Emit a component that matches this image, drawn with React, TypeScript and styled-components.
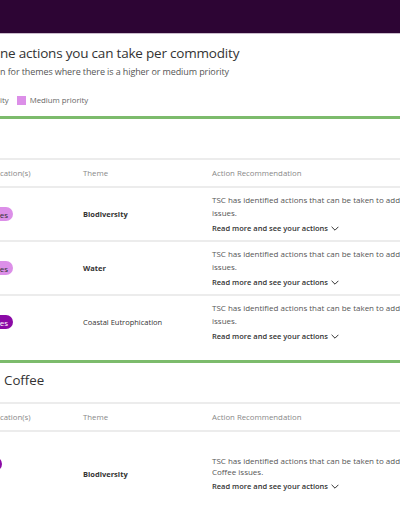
import styled, { createGlobalStyle } from "styled-components";

const GlobalStyle = createGlobalStyle`
  html, body {
    margin: 0;
    padding: 0;
    background: #fff;
    overflow: hidden;
    font-family: "Open Sans", "Noto Sans", sans-serif;
    color: #333;
  }
`;

type Priority = "higher" | "medium";

// visible = how far the pill's right end reaches into the frame
interface PillData {
  priority: Priority;
  visible: number;
}

interface Row {
  theme: string;
  bold?: boolean;
  pills: PillData[];
  lines: string[];
}

interface Commodity {
  name: string;
  rows: Row[];
}

const commodities: Commodity[] = [
  {
    name: "",
    rows: [
      {
        theme: "Biodiversity",
        bold: true,
        pills: [{ priority: "medium", visible: 13 }],
        lines: ["TSC has identified actions that can be taken to address Soy Biodiversity", "issues."],
      },
      {
        theme: "Water",
        bold: true,
        pills: [{ priority: "medium", visible: 13 }],
        lines: ["TSC has identified actions that can be taken to address Soy Water", "issues."],
      },
      {
        theme: "Coastal Eutrophication",
        pills: [{ priority: "higher", visible: 13 }],
        lines: ["TSC has identified actions that can be taken to address Soy Eutrophication", "issues."],
      },
    ],
  },
  {
    name: "Coffee",
    rows: [
      {
        theme: "Biodiversity",
        bold: true,
        pills: [
          { priority: "medium", visible: -4 },
          { priority: "higher", visible: 1.5 },
          { priority: "medium", visible: -4 },
          { priority: "medium", visible: -4 },
        ],
        lines: ["TSC has identified actions that can be taken to address Biodiversity", "Coffee issues."],
      },
    ],
  },
];

export default function App() {
  return (
    <>
      <GlobalStyle />
      <TopBar />
      <Intro>
        <Title>ne actions you can take per commodity</Title>
        <Subtitle>n for themes where there is a higher or medium priority</Subtitle>
        <Legend>
          <LegendItem>ity</LegendItem>
          <LegendItem>
            <Swatch />
            Medium priority
          </LegendItem>
        </Legend>
      </Intro>
      {commodities.map((c, i) => (
        <Section key={i}>
          <SectionTitle>{c.name}</SectionTitle>
          <HeadRow>
            <HeadCell>cation(s)</HeadCell>
            <HeadCell>Theme</HeadCell>
            <HeadCell>Action Recommendation</HeadCell>
          </HeadRow>
          {c.rows.map((r, j) => (
            <BodyRow key={j}>
              <PillStack>
                {r.pills.map((p, k) => (
                  <Pill key={k} $priority={p.priority} $visible={p.visible}>
                    es
                  </Pill>
                ))}
              </PillStack>
              <ThemeCell $bold={r.bold}>{r.theme}</ThemeCell>
              <ActionCell>
                <ActionText $tight={c.name !== ""}>
                  {r.lines[0]}
                  <br />
                  {r.lines[1]}
                </ActionText>
                <ReadMore>
                  Read more and see your actions
                  <svg width="8" height="5" viewBox="0 0 8 5" fill="none">
                    <polyline points="0.6,0.8 4,4.2 7.4,0.8" stroke="#333" strokeWidth="1" />
                  </svg>
                </ReadMore>
              </ActionCell>
            </BodyRow>
          ))}
        </Section>
      ))}
    </>
  );
}

const TopBar = styled.header`
  height: 33px;
  background: #2d0534;
  border-bottom: 1px solid #c9bccb;
`;

const Intro = styled.div`
  padding-top: 9px;
  height: 73px;
  border-bottom: 3px solid #7cbb6c;
`;

const Title = styled.h1`
  margin: 0;
  font-size: 13.5px;
  font-weight: 500;
  letter-spacing: -0.2px;
  line-height: 20px;
  white-space: nowrap;
  color: #333;
`;

const Subtitle = styled.p`
  margin: 3px 0 0;
  font-size: 9px;
  letter-spacing: -0.1px;
  line-height: 12px;
  color: #555;
  white-space: nowrap;
`;

const Legend = styled.div`
  display: flex;
  align-items: center;
  gap: 8px;
  margin-top: 17px;
  font-size: 7.8px;
  line-height: 11px;
  color: #666;
`;

const LegendItem = styled.span`
  display: flex;
  align-items: center;
  gap: 4px;
`;

const Swatch = styled.span`
  width: 9px;
  height: 9px;
  background: #dc8fe8;
`;

const Section = styled.section`
  margin-bottom: 12px;
  & + & {
    border-top: 3px solid #7cbb6c;
  }
`;

const SectionTitle = styled.h2`
  margin: 0;
  height: 39px;
  padding-left: 4px;
  font-size: 13.3px;
  font-weight: 500;
  line-height: 34px;
  color: #333;
`;

const rowGrid = `
  display: grid;
  grid-template-columns: 83px 129px 320px;
  align-items: center;
  border-top: 2px solid #ececec;
`;

const HeadRow = styled.div`
  ${rowGrid}
  height: 26px;
`;

const HeadCell = styled.div`
  font-size: 7.8px;
  color: #888;
  white-space: nowrap;
`;

const BodyRow = styled.div`
  ${rowGrid}
  padding: 5px 0;
  & + & {
    border-top: 2px solid #ececec;
  }
`;

const PillStack = styled.div`
  display: flex;
  flex-direction: column;
  gap: 6px;
`;

const Pill = styled.span<{ $priority: Priority; $visible: number }>`
  display: flex;
  align-items: center;
  justify-content: flex-end;
  box-sizing: border-box;
  width: 40px;
  height: 14px;
  margin-left: ${(p) => p.$visible - 40}px;
  padding-right: 5px;
  border-radius: 7px;
  font-size: 8px;
  color: ${(p) => (p.$priority === "higher" ? "#fff" : "#333")};
  background: ${(p) => (p.$priority === "higher" ? "#8b0aa6" : "#dc8fe8")};
`;

const ThemeCell = styled.div<{ $bold?: boolean }>`
  font-size: 7.5px;
  font-weight: ${(p) => (p.$bold ? 700 : 500)};
  color: #333;
`;

const ActionCell = styled.div`
  display: flex;
  flex-direction: column;
  gap: 3px;
`;

const ActionText = styled.p<{ $tight?: boolean }>`
  margin: 0;
  font-size: 8px;
  line-height: ${(p) => (p.$tight ? "11px" : "13px")};
  color: #555;
  white-space: nowrap;
`;

const ReadMore = styled.a`
  display: flex;
  align-items: center;
  gap: 3px;
  font-size: 7.5px;
  font-weight: 600;
  line-height: 13px;
  color: #333;
  cursor: pointer;
`;
